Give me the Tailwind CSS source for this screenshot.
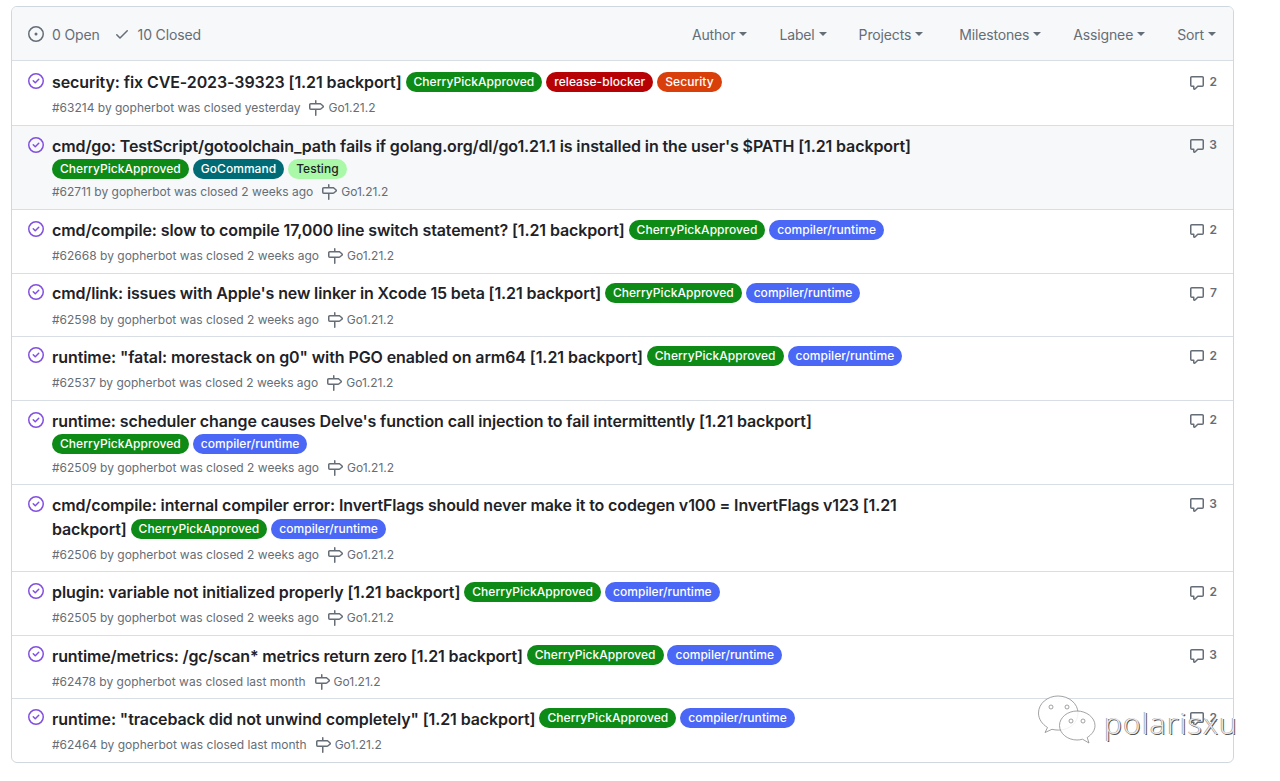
<!DOCTYPE html>
<html lang="en"><head><meta charset="utf-8"><title>Issues</title>
<script src="https://cdn.jsdelivr.net/npm/@tailwindcss/browser@4"></script></head>
<body class="bg-white font-['Inter','Liberation_Sans',sans-serif] overflow-hidden h-[781px] relative">
<div class="ml-[11px] mt-[6px] w-[1223px] h-[757px] border border-[#d0d7de] rounded-md overflow-hidden text-[#1f2328]">
 <div class="h-[53px] bg-[#f6f8fa] flex items-center pl-[16px] pr-[17px] pt-[1px] text-[14px] tracking-[-0.15px] text-[#656d76]">
  <svg class="w-4 h-4 mr-[8px]" viewBox="0 0 16 16" fill="#656d76"><path d="M8 9.5a1.5 1.5 0 1 0 0-3 1.5 1.5 0 0 0 0 3Z"/><path d="M8 0a8 8 0 1 1 0 16A8 8 0 0 1 8 0ZM1.5 8a6.5 6.5 0 1 0 13 0 6.5 6.5 0 0 0-13 0Z"/></svg>
  <span>0 Open</span>
  <svg class="w-4 h-4 ml-[14px] mr-[8px]" viewBox="0 0 16 16" fill="#656d76"><path d="M13.78 4.22a.75.75 0 0 1 0 1.06l-7.25 7.25a.75.75 0 0 1-1.06 0L2.22 9.28a.751.751 0 0 1 1.06-1.06L6 10.94l6.72-6.72a.75.75 0 0 1 1.06 0Z"/></svg>
  <span>10 Closed</span>
  <div class="ml-auto flex items-center">
   <span class="flex items-center">Author<i class="ml-[4px] border-x-4 border-x-transparent border-t-4 border-t-[#656d76]"></i></span>
   <span class="flex items-center ml-[32px]">Label<i class="ml-[4px] border-x-4 border-x-transparent border-t-4 border-t-[#656d76]"></i></span>
   <span class="flex items-center ml-[32px]">Projects<i class="ml-[4px] border-x-4 border-x-transparent border-t-4 border-t-[#656d76]"></i></span>
   <span class="flex items-center ml-[36px]">Milestones<i class="ml-[4px] border-x-4 border-x-transparent border-t-4 border-t-[#656d76]"></i></span>
   <span class="flex items-center ml-[32px]">Assignee<i class="ml-[4px] border-x-4 border-x-transparent border-t-4 border-t-[#656d76]"></i></span>
   <span class="flex items-center ml-[32px]">Sort<i class="ml-[4px] border-x-4 border-x-transparent border-t-4 border-t-[#656d76]"></i></span>
  </div>
 </div>

 <div class="h-[65px] border-t border-[#d8dee4] flex pl-[16px] pr-[16px] pt-[11px]">
  <svg class="w-4 h-4 mt-[1px] mr-[8px] shrink-0" viewBox="0 0 16 16" fill="#8250df"><path d="M11.28 6.78a.75.75 0 0 0-1.06-1.06L7.25 8.69 5.78 7.22a.75.75 0 0 0-1.06 1.06l2 2a.75.75 0 0 0 1.06 0l3.5-3.5Z"/><path d="M16 8A8 8 0 1 1 0 8a8 8 0 0 1 16 0Zm-1.5 0a6.5 6.5 0 1 0-13 0 6.5 6.5 0 0 0 13 0Z"/></svg>
  <div class="flex-1">
   <div class="w-[880px] text-[16px] leading-[21px] font-semibold tracking-[-0.09px]">security: fix CVE-2023-39323 [1.21 backport] <span class="inline-block align-[2px] h-[20px] rounded-full px-[8px] text-[12px] leading-[20px] font-medium tracking-[0.05px] bg-[#0e8a16] text-white">CherryPickApproved</span> <span class="inline-block align-[2px] h-[20px] rounded-full px-[8px] text-[12px] leading-[20px] font-medium tracking-[0.05px] bg-[#b60205] text-white">release-blocker</span> <span class="inline-block align-[2px] h-[20px] rounded-full px-[8px] text-[12px] leading-[20px] font-medium tracking-[0.05px] bg-[#d93f0b] text-white">Security</span></div>
   <div class="mt-[6px] flex items-center text-[12px] leading-[18px] text-[#656d76]">#63214 by gopherbot was closed yesterday<svg class="w-4 h-4 ml-[8px] mr-[4px]" viewBox="0 0 16 16" fill="#656d76"><path d="M7.75 0a.75.75 0 0 1 .75.75V3h3.634c.414 0 .814.147 1.13.414l2.07 1.75a1.75 1.75 0 0 1 0 2.672l-2.07 1.75a1.75 1.75 0 0 1-1.13.414H8.5v5.25a.75.75 0 0 1-1.5 0V10H2.75A1.75 1.75 0 0 1 1 8.25v-3.5C1 3.784 1.784 3 2.75 3H7V.75A.75.75 0 0 1 7.75 0Zm4.384 8.5a.25.25 0 0 0 .161-.06l2.07-1.75a.248.248 0 0 0 0-.38l-2.07-1.75a.25.25 0 0 0-.161-.06H2.75a.25.25 0 0 0-.25.25v3.5c0 .138.112.25.25.25h9.384Z"/></svg>Go1.21.2</div>
  </div>
  <div class="mt-[1px] flex items-start text-[12px] font-semibold leading-[18px] text-[#656d76]"><svg class="w-4 h-4 mr-[5px] mt-[2px]" viewBox="0 0 16 16" fill="#656d76"><path d="M1 2.75C1 1.784 1.784 1 2.75 1h10.5c.966 0 1.75.784 1.75 1.75v7.5A1.75 1.75 0 0 1 13.25 12H9.06l-2.573 2.573A1.458 1.458 0 0 1 4 13.543V12H2.75A1.75 1.75 0 0 1 1 10.25Zm1.75-.25a.25.25 0 0 0-.25.25v7.5c0 .138.112.25.25.25h2a.75.75 0 0 1 .75.75v2.19l2.72-2.72a.749.749 0 0 1 .53-.22h4.5a.25.25 0 0 0 .25-.25v-7.5a.25.25 0 0 0-.25-.25Z"/></svg>2</div>
 </div>

 <div class="h-[84px] bg-[#f6f8fa] border-t border-[#d8dee4] flex pl-[16px] pr-[16px] pt-[9px]">
  <svg class="w-4 h-4 mt-[2px] mr-[8px] shrink-0" viewBox="0 0 16 16" fill="#8250df"><path d="M11.28 6.78a.75.75 0 0 0-1.06-1.06L7.25 8.69 5.78 7.22a.75.75 0 0 0-1.06 1.06l2 2a.75.75 0 0 0 1.06 0l3.5-3.5Z"/><path d="M16 8A8 8 0 1 1 0 8a8 8 0 0 1 16 0Zm-1.5 0a6.5 6.5 0 1 0-13 0 6.5 6.5 0 0 0 13 0Z"/></svg>
  <div class="flex-1">
   <div class="w-[880px] text-[16px] leading-[23px] font-semibold tracking-[-0.11px]">cmd/go: TestScript/gotoolchain_path fails if golang.org/dl/go1.21.1 is installed in the user's $PATH [1.21 backport] <span class="inline-block align-[2px] h-[20px] rounded-full px-[8px] text-[12px] leading-[20px] font-medium tracking-[0.05px] bg-[#0e8a16] text-white">CherryPickApproved</span> <span class="inline-block align-[2px] h-[20px] rounded-full px-[8px] text-[12px] leading-[20px] font-medium tracking-[0.05px] bg-[#006b75] text-white">GoCommand</span> <span class="inline-block align-[2px] h-[20px] rounded-full px-[8px] text-[12px] leading-[20px] font-medium tracking-[0.05px] bg-[#a9f9a9] text-[#1f2328]">Testing</span></div>
   <div class="mt-[2px] flex items-center text-[12px] leading-[18px] text-[#656d76]">#62711 by gopherbot was closed 2 weeks ago<svg class="w-4 h-4 ml-[8px] mr-[4px]" viewBox="0 0 16 16" fill="#656d76"><path d="M7.75 0a.75.75 0 0 1 .75.75V3h3.634c.414 0 .814.147 1.13.414l2.07 1.75a1.75 1.75 0 0 1 0 2.672l-2.07 1.75a1.75 1.75 0 0 1-1.13.414H8.5v5.25a.75.75 0 0 1-1.5 0V10H2.75A1.75 1.75 0 0 1 1 8.25v-3.5C1 3.784 1.784 3 2.75 3H7V.75A.75.75 0 0 1 7.75 0Zm4.384 8.5a.25.25 0 0 0 .161-.06l2.07-1.75a.248.248 0 0 0 0-.38l-2.07-1.75a.25.25 0 0 0-.161-.06H2.75a.25.25 0 0 0-.25.25v3.5c0 .138.112.25.25.25h9.384Z"/></svg>Go1.21.2</div>
  </div>
  <div class="mt-[1px] flex items-start text-[12px] font-semibold leading-[18px] text-[#656d76]"><svg class="w-4 h-4 mr-[4px] mt-[2px]" viewBox="0 0 16 16" fill="#656d76"><path d="M1 2.75C1 1.784 1.784 1 2.75 1h10.5c.966 0 1.75.784 1.75 1.75v7.5A1.75 1.75 0 0 1 13.25 12H9.06l-2.573 2.573A1.458 1.458 0 0 1 4 13.543V12H2.75A1.75 1.75 0 0 1 1 10.25Zm1.75-.25a.25.25 0 0 0-.25.25v7.5c0 .138.112.25.25.25h2a.75.75 0 0 1 .75.75v2.19l2.72-2.72a.749.749 0 0 1 .53-.22h4.5a.25.25 0 0 0 .25-.25v-7.5a.25.25 0 0 0-.25-.25Z"/></svg>3</div>
 </div>

 <div class="h-[64px] border-t border-[#d8dee4] flex pl-[16px] pr-[16px] pt-[10px]">
  <svg class="w-4 h-4 mt-[1px] mr-[8px] shrink-0" viewBox="0 0 16 16" fill="#8250df"><path d="M11.28 6.78a.75.75 0 0 0-1.06-1.06L7.25 8.69 5.78 7.22a.75.75 0 0 0-1.06 1.06l2 2a.75.75 0 0 0 1.06 0l3.5-3.5Z"/><path d="M16 8A8 8 0 1 1 0 8a8 8 0 0 1 16 0Zm-1.5 0a6.5 6.5 0 1 0-13 0 6.5 6.5 0 0 0 13 0Z"/></svg>
  <div class="flex-1">
   <div class="w-[880px] text-[16px] leading-[21px] font-semibold tracking-[-0.11px]">cmd/compile: slow to compile 17,000 line switch statement? [1.21 backport] <span class="inline-block align-[2px] h-[20px] rounded-full px-[8px] text-[12px] leading-[20px] font-medium tracking-[0.05px] bg-[#0e8a16] text-white">CherryPickApproved</span> <span class="inline-block align-[2px] h-[20px] rounded-full px-[8px] text-[12px] leading-[20px] font-medium tracking-[0.05px] bg-[#4a67f5] text-white">compiler/runtime</span></div>
   <div class="mt-[6px] flex items-center text-[12px] leading-[18px] text-[#656d76]">#62668 by gopherbot was closed 2 weeks ago<svg class="w-4 h-4 ml-[8px] mr-[4px]" viewBox="0 0 16 16" fill="#656d76"><path d="M7.75 0a.75.75 0 0 1 .75.75V3h3.634c.414 0 .814.147 1.13.414l2.07 1.75a1.75 1.75 0 0 1 0 2.672l-2.07 1.75a1.75 1.75 0 0 1-1.13.414H8.5v5.25a.75.75 0 0 1-1.5 0V10H2.75A1.75 1.75 0 0 1 1 8.25v-3.5C1 3.784 1.784 3 2.75 3H7V.75A.75.75 0 0 1 7.75 0Zm4.384 8.5a.25.25 0 0 0 .161-.06l2.07-1.75a.248.248 0 0 0 0-.38l-2.07-1.75a.25.25 0 0 0-.161-.06H2.75a.25.25 0 0 0-.25.25v3.5c0 .138.112.25.25.25h9.384Z"/></svg>Go1.21.2</div>
  </div>
  <div class="mt-[1px] flex items-start text-[12px] font-semibold leading-[18px] text-[#656d76]"><svg class="w-4 h-4 mr-[5px] mt-[2px]" viewBox="0 0 16 16" fill="#656d76"><path d="M1 2.75C1 1.784 1.784 1 2.75 1h10.5c.966 0 1.75.784 1.75 1.75v7.5A1.75 1.75 0 0 1 13.25 12H9.06l-2.573 2.573A1.458 1.458 0 0 1 4 13.543V12H2.75A1.75 1.75 0 0 1 1 10.25Zm1.75-.25a.25.25 0 0 0-.25.25v7.5c0 .138.112.25.25.25h2a.75.75 0 0 1 .75.75v2.19l2.72-2.72a.749.749 0 0 1 .53-.22h4.5a.25.25 0 0 0 .25-.25v-7.5a.25.25 0 0 0-.25-.25Z"/></svg>2</div>
 </div>

 <div class="h-[63px] border-t border-[#d8dee4] flex pl-[16px] pr-[16px] pt-[9px]">
  <svg class="w-4 h-4 mt-[1px] mr-[8px] shrink-0" viewBox="0 0 16 16" fill="#8250df"><path d="M11.28 6.78a.75.75 0 0 0-1.06-1.06L7.25 8.69 5.78 7.22a.75.75 0 0 0-1.06 1.06l2 2a.75.75 0 0 0 1.06 0l3.5-3.5Z"/><path d="M16 8A8 8 0 1 1 0 8a8 8 0 0 1 16 0Zm-1.5 0a6.5 6.5 0 1 0-13 0 6.5 6.5 0 0 0 13 0Z"/></svg>
  <div class="flex-1">
   <div class="w-[880px] text-[16px] leading-[21px] font-semibold tracking-[-0.13px]">cmd/link: issues with Apple's new linker in Xcode 15 beta [1.21 backport] <span class="inline-block align-[2px] h-[20px] rounded-full px-[8px] text-[12px] leading-[20px] font-medium tracking-[0.05px] bg-[#0e8a16] text-white">CherryPickApproved</span> <span class="inline-block align-[2px] h-[20px] rounded-full px-[8px] text-[12px] leading-[20px] font-medium tracking-[0.05px] bg-[#4a67f5] text-white">compiler/runtime</span></div>
   <div class="mt-[7px] flex items-center text-[12px] leading-[18px] text-[#656d76]">#62598 by gopherbot was closed 2 weeks ago<svg class="w-4 h-4 ml-[8px] mr-[4px]" viewBox="0 0 16 16" fill="#656d76"><path d="M7.75 0a.75.75 0 0 1 .75.75V3h3.634c.414 0 .814.147 1.13.414l2.07 1.75a1.75 1.75 0 0 1 0 2.672l-2.07 1.75a1.75 1.75 0 0 1-1.13.414H8.5v5.25a.75.75 0 0 1-1.5 0V10H2.75A1.75 1.75 0 0 1 1 8.25v-3.5C1 3.784 1.784 3 2.75 3H7V.75A.75.75 0 0 1 7.75 0Zm4.384 8.5a.25.25 0 0 0 .161-.06l2.07-1.75a.248.248 0 0 0 0-.38l-2.07-1.75a.25.25 0 0 0-.161-.06H2.75a.25.25 0 0 0-.25.25v3.5c0 .138.112.25.25.25h9.384Z"/></svg>Go1.21.2</div>
  </div>
  <div class="mt-[1px] flex items-start text-[12px] font-semibold leading-[18px] text-[#656d76]"><svg class="w-4 h-4 mr-[5px] mt-[2px]" viewBox="0 0 16 16" fill="#656d76"><path d="M1 2.75C1 1.784 1.784 1 2.75 1h10.5c.966 0 1.75.784 1.75 1.75v7.5A1.75 1.75 0 0 1 13.25 12H9.06l-2.573 2.573A1.458 1.458 0 0 1 4 13.543V12H2.75A1.75 1.75 0 0 1 1 10.25Zm1.75-.25a.25.25 0 0 0-.25.25v7.5c0 .138.112.25.25.25h2a.75.75 0 0 1 .75.75v2.19l2.72-2.72a.749.749 0 0 1 .53-.22h4.5a.25.25 0 0 0 .25-.25v-7.5a.25.25 0 0 0-.25-.25Z"/></svg>7</div>
 </div>

 <div class="h-[64px] border-t border-[#d8dee4] flex pl-[16px] pr-[16px] pt-[9px]">
  <svg class="w-4 h-4 mt-[1px] mr-[8px] shrink-0" viewBox="0 0 16 16" fill="#8250df"><path d="M11.28 6.78a.75.75 0 0 0-1.06-1.06L7.25 8.69 5.78 7.22a.75.75 0 0 0-1.06 1.06l2 2a.75.75 0 0 0 1.06 0l3.5-3.5Z"/><path d="M16 8A8 8 0 1 1 0 8a8 8 0 0 1 16 0Zm-1.5 0a6.5 6.5 0 1 0-13 0 6.5 6.5 0 0 0 13 0Z"/></svg>
  <div class="flex-1">
   <div class="w-[880px] text-[16px] leading-[21px] font-semibold tracking-[-0.09px]">runtime: "fatal: morestack on g0" with PGO enabled on arm64 [1.21 backport] <span class="inline-block align-[3px] h-[20px] rounded-full px-[8px] text-[12px] leading-[20px] font-medium tracking-[0.05px] bg-[#0e8a16] text-white">CherryPickApproved</span> <span class="inline-block align-[3px] h-[20px] rounded-full px-[8px] text-[12px] leading-[20px] font-medium tracking-[0.05px] bg-[#4a67f5] text-white">compiler/runtime</span></div>
   <div class="mt-[6px] flex items-center text-[12px] leading-[18px] text-[#656d76]">#62537 by gopherbot was closed 2 weeks ago<svg class="w-4 h-4 ml-[8px] mr-[4px]" viewBox="0 0 16 16" fill="#656d76"><path d="M7.75 0a.75.75 0 0 1 .75.75V3h3.634c.414 0 .814.147 1.13.414l2.07 1.75a1.75 1.75 0 0 1 0 2.672l-2.07 1.75a1.75 1.75 0 0 1-1.13.414H8.5v5.25a.75.75 0 0 1-1.5 0V10H2.75A1.75 1.75 0 0 1 1 8.25v-3.5C1 3.784 1.784 3 2.75 3H7V.75A.75.75 0 0 1 7.75 0Zm4.384 8.5a.25.25 0 0 0 .161-.06l2.07-1.75a.248.248 0 0 0 0-.38l-2.07-1.75a.25.25 0 0 0-.161-.06H2.75a.25.25 0 0 0-.25.25v3.5c0 .138.112.25.25.25h9.384Z"/></svg>Go1.21.2</div>
  </div>
  <div class="mt-[1px] flex items-start text-[12px] font-semibold leading-[18px] text-[#656d76]"><svg class="w-4 h-4 mr-[5px] mt-[2px]" viewBox="0 0 16 16" fill="#656d76"><path d="M1 2.75C1 1.784 1.784 1 2.75 1h10.5c.966 0 1.75.784 1.75 1.75v7.5A1.75 1.75 0 0 1 13.25 12H9.06l-2.573 2.573A1.458 1.458 0 0 1 4 13.543V12H2.75A1.75 1.75 0 0 1 1 10.25Zm1.75-.25a.25.25 0 0 0-.25.25v7.5c0 .138.112.25.25.25h2a.75.75 0 0 1 .75.75v2.19l2.72-2.72a.749.749 0 0 1 .53-.22h4.5a.25.25 0 0 0 .25-.25v-7.5a.25.25 0 0 0-.25-.25Z"/></svg>2</div>
 </div>

 <div class="h-[84px] border-t border-[#d8dee4] flex pl-[16px] pr-[16px] pt-[9px]">
  <svg class="w-4 h-4 mt-[2px] mr-[8px] shrink-0" viewBox="0 0 16 16" fill="#8250df"><path d="M11.28 6.78a.75.75 0 0 0-1.06-1.06L7.25 8.69 5.78 7.22a.75.75 0 0 0-1.06 1.06l2 2a.75.75 0 0 0 1.06 0l3.5-3.5Z"/><path d="M16 8A8 8 0 1 1 0 8a8 8 0 0 1 16 0Zm-1.5 0a6.5 6.5 0 1 0-13 0 6.5 6.5 0 0 0 13 0Z"/></svg>
  <div class="flex-1">
   <div class="w-[880px] text-[16px] leading-[23px] font-semibold tracking-[-0.11px]">runtime: scheduler change causes Delve's function call injection to fail intermittently [1.21 backport] <span class="inline-block align-[2px] h-[20px] rounded-full px-[8px] text-[12px] leading-[20px] font-medium tracking-[0.05px] bg-[#0e8a16] text-white">CherryPickApproved</span> <span class="inline-block align-[2px] h-[20px] rounded-full px-[8px] text-[12px] leading-[20px] font-medium tracking-[0.05px] bg-[#4a67f5] text-white">compiler/runtime</span></div>
   <div class="mt-[3px] flex items-center text-[12px] leading-[18px] text-[#656d76]">#62509 by gopherbot was closed 2 weeks ago<svg class="w-4 h-4 ml-[8px] mr-[4px]" viewBox="0 0 16 16" fill="#656d76"><path d="M7.75 0a.75.75 0 0 1 .75.75V3h3.634c.414 0 .814.147 1.13.414l2.07 1.75a1.75 1.75 0 0 1 0 2.672l-2.07 1.75a1.75 1.75 0 0 1-1.13.414H8.5v5.25a.75.75 0 0 1-1.5 0V10H2.75A1.75 1.75 0 0 1 1 8.25v-3.5C1 3.784 1.784 3 2.75 3H7V.75A.75.75 0 0 1 7.75 0Zm4.384 8.5a.25.25 0 0 0 .161-.06l2.07-1.75a.248.248 0 0 0 0-.38l-2.07-1.75a.25.25 0 0 0-.161-.06H2.75a.25.25 0 0 0-.25.25v3.5c0 .138.112.25.25.25h9.384Z"/></svg>Go1.21.2</div>
  </div>
  <div class="mt-[1px] flex items-start text-[12px] font-semibold leading-[18px] text-[#656d76]"><svg class="w-4 h-4 mr-[5px] mt-[2px]" viewBox="0 0 16 16" fill="#656d76"><path d="M1 2.75C1 1.784 1.784 1 2.75 1h10.5c.966 0 1.75.784 1.75 1.75v7.5A1.75 1.75 0 0 1 13.25 12H9.06l-2.573 2.573A1.458 1.458 0 0 1 4 13.543V12H2.75A1.75 1.75 0 0 1 1 10.25Zm1.75-.25a.25.25 0 0 0-.25.25v7.5c0 .138.112.25.25.25h2a.75.75 0 0 1 .75.75v2.19l2.72-2.72a.749.749 0 0 1 .53-.22h4.5a.25.25 0 0 0 .25-.25v-7.5a.25.25 0 0 0-.25-.25Z"/></svg>2</div>
 </div>

 <div class="h-[87px] border-t border-[#d8dee4] flex pl-[16px] pr-[16px] pt-[8px]">
  <svg class="w-4 h-4 mt-[3px] mr-[8px] shrink-0" viewBox="0 0 16 16" fill="#8250df"><path d="M11.28 6.78a.75.75 0 0 0-1.06-1.06L7.25 8.69 5.78 7.22a.75.75 0 0 0-1.06 1.06l2 2a.75.75 0 0 0 1.06 0l3.5-3.5Z"/><path d="M16 8A8 8 0 1 1 0 8a8 8 0 0 1 16 0Zm-1.5 0a6.5 6.5 0 1 0-13 0 6.5 6.5 0 0 0 13 0Z"/></svg>
  <div class="flex-1">
   <div class="w-[880px] text-[16px] leading-[24px] font-semibold tracking-[-0.125px]">cmd/compile: internal compiler error: InvertFlags should never make it to codegen v100 = InvertFlags v123 [1.21 backport] <span class="inline-block align-[2px] h-[20px] rounded-full px-[8px] text-[12px] leading-[20px] font-medium tracking-[0.05px] bg-[#0e8a16] text-white">CherryPickApproved</span> <span class="inline-block align-[2px] h-[20px] rounded-full px-[8px] text-[12px] leading-[20px] font-medium tracking-[0.05px] bg-[#4a67f5] text-white">compiler/runtime</span></div>
   <div class="mt-[5px] flex items-center text-[12px] leading-[18px] text-[#656d76]">#62506 by gopherbot was closed 2 weeks ago<svg class="w-4 h-4 ml-[8px] mr-[4px]" viewBox="0 0 16 16" fill="#656d76"><path d="M7.75 0a.75.75 0 0 1 .75.75V3h3.634c.414 0 .814.147 1.13.414l2.07 1.75a1.75 1.75 0 0 1 0 2.672l-2.07 1.75a1.75 1.75 0 0 1-1.13.414H8.5v5.25a.75.75 0 0 1-1.5 0V10H2.75A1.75 1.75 0 0 1 1 8.25v-3.5C1 3.784 1.784 3 2.75 3H7V.75A.75.75 0 0 1 7.75 0Zm4.384 8.5a.25.25 0 0 0 .161-.06l2.07-1.75a.248.248 0 0 0 0-.38l-2.07-1.75a.25.25 0 0 0-.161-.06H2.75a.25.25 0 0 0-.25.25v3.5c0 .138.112.25.25.25h9.384Z"/></svg>Go1.21.2</div>
  </div>
  <div class="mt-[2px] flex items-start text-[12px] font-semibold leading-[18px] text-[#656d76]"><svg class="w-4 h-4 mr-[4px] mt-[2px]" viewBox="0 0 16 16" fill="#656d76"><path d="M1 2.75C1 1.784 1.784 1 2.75 1h10.5c.966 0 1.75.784 1.75 1.75v7.5A1.75 1.75 0 0 1 13.25 12H9.06l-2.573 2.573A1.458 1.458 0 0 1 4 13.543V12H2.75A1.75 1.75 0 0 1 1 10.25Zm1.75-.25a.25.25 0 0 0-.25.25v7.5c0 .138.112.25.25.25h2a.75.75 0 0 1 .75.75v2.19l2.72-2.72a.749.749 0 0 1 .53-.22h4.5a.25.25 0 0 0 .25-.25v-7.5a.25.25 0 0 0-.25-.25Z"/></svg>3</div>
 </div>

 <div class="h-[64px] border-t border-[#d8dee4] flex pl-[16px] pr-[16px] pt-[10px]">
  <svg class="w-4 h-4 mt-[1px] mr-[8px] shrink-0" viewBox="0 0 16 16" fill="#8250df"><path d="M11.28 6.78a.75.75 0 0 0-1.06-1.06L7.25 8.69 5.78 7.22a.75.75 0 0 0-1.06 1.06l2 2a.75.75 0 0 0 1.06 0l3.5-3.5Z"/><path d="M16 8A8 8 0 1 1 0 8a8 8 0 0 1 16 0Zm-1.5 0a6.5 6.5 0 1 0-13 0 6.5 6.5 0 0 0 13 0Z"/></svg>
  <div class="flex-1">
   <div class="w-[880px] text-[16px] leading-[21px] font-semibold tracking-[-0.1px]">plugin: variable not initialized properly [1.21 backport] <span class="inline-block align-[2px] h-[20px] rounded-full px-[8px] text-[12px] leading-[20px] font-medium tracking-[0.05px] bg-[#0e8a16] text-white">CherryPickApproved</span> <span class="inline-block align-[2px] h-[20px] rounded-full px-[8px] text-[12px] leading-[20px] font-medium tracking-[0.05px] bg-[#4a67f5] text-white">compiler/runtime</span></div>
   <div class="mt-[6px] flex items-center text-[12px] leading-[18px] text-[#656d76]">#62505 by gopherbot was closed 2 weeks ago<svg class="w-4 h-4 ml-[8px] mr-[4px]" viewBox="0 0 16 16" fill="#656d76"><path d="M7.75 0a.75.75 0 0 1 .75.75V3h3.634c.414 0 .814.147 1.13.414l2.07 1.75a1.75 1.75 0 0 1 0 2.672l-2.07 1.75a1.75 1.75 0 0 1-1.13.414H8.5v5.25a.75.75 0 0 1-1.5 0V10H2.75A1.75 1.75 0 0 1 1 8.25v-3.5C1 3.784 1.784 3 2.75 3H7V.75A.75.75 0 0 1 7.75 0Zm4.384 8.5a.25.25 0 0 0 .161-.06l2.07-1.75a.248.248 0 0 0 0-.38l-2.07-1.75a.25.25 0 0 0-.161-.06H2.75a.25.25 0 0 0-.25.25v3.5c0 .138.112.25.25.25h9.384Z"/></svg>Go1.21.2</div>
  </div>
  <div class="mt-[1px] flex items-start text-[12px] font-semibold leading-[18px] text-[#656d76]"><svg class="w-4 h-4 mr-[5px] mt-[2px]" viewBox="0 0 16 16" fill="#656d76"><path d="M1 2.75C1 1.784 1.784 1 2.75 1h10.5c.966 0 1.75.784 1.75 1.75v7.5A1.75 1.75 0 0 1 13.25 12H9.06l-2.573 2.573A1.458 1.458 0 0 1 4 13.543V12H2.75A1.75 1.75 0 0 1 1 10.25Zm1.75-.25a.25.25 0 0 0-.25.25v7.5c0 .138.112.25.25.25h2a.75.75 0 0 1 .75.75v2.19l2.72-2.72a.749.749 0 0 1 .53-.22h4.5a.25.25 0 0 0 .25-.25v-7.5a.25.25 0 0 0-.25-.25Z"/></svg>2</div>
 </div>

 <div class="h-[63px] border-t border-[#d8dee4] flex pl-[16px] pr-[16px] pt-[9px]">
  <svg class="w-4 h-4 mt-[1px] mr-[8px] shrink-0" viewBox="0 0 16 16" fill="#8250df"><path d="M11.28 6.78a.75.75 0 0 0-1.06-1.06L7.25 8.69 5.78 7.22a.75.75 0 0 0-1.06 1.06l2 2a.75.75 0 0 0 1.06 0l3.5-3.5Z"/><path d="M16 8A8 8 0 1 1 0 8a8 8 0 0 1 16 0Zm-1.5 0a6.5 6.5 0 1 0-13 0 6.5 6.5 0 0 0 13 0Z"/></svg>
  <div class="flex-1">
   <div class="w-[880px] text-[16px] leading-[21px] font-semibold tracking-[-0.155px]">runtime/metrics: /gc/scan* metrics return zero [1.21 backport] <span class="inline-block align-[3px] h-[20px] rounded-full px-[8px] text-[12px] leading-[20px] font-medium tracking-[0.05px] bg-[#0e8a16] text-white">CherryPickApproved</span> <span class="inline-block align-[3px] h-[20px] rounded-full px-[8px] text-[12px] leading-[20px] font-medium tracking-[0.05px] bg-[#4a67f5] text-white">compiler/runtime</span></div>
   <div class="mt-[6px] flex items-center text-[12px] leading-[18px] text-[#656d76]">#62478 by gopherbot was closed last month<svg class="w-4 h-4 ml-[8px] mr-[4px]" viewBox="0 0 16 16" fill="#656d76"><path d="M7.75 0a.75.75 0 0 1 .75.75V3h3.634c.414 0 .814.147 1.13.414l2.07 1.75a1.75 1.75 0 0 1 0 2.672l-2.07 1.75a1.75 1.75 0 0 1-1.13.414H8.5v5.25a.75.75 0 0 1-1.5 0V10H2.75A1.75 1.75 0 0 1 1 8.25v-3.5C1 3.784 1.784 3 2.75 3H7V.75A.75.75 0 0 1 7.75 0Zm4.384 8.5a.25.25 0 0 0 .161-.06l2.07-1.75a.248.248 0 0 0 0-.38l-2.07-1.75a.25.25 0 0 0-.161-.06H2.75a.25.25 0 0 0-.25.25v3.5c0 .138.112.25.25.25h9.384Z"/></svg>Go1.21.2</div>
  </div>
  <div class="mt-[1px] flex items-start text-[12px] font-semibold leading-[18px] text-[#656d76]"><svg class="w-4 h-4 mr-[4px] mt-[2px]" viewBox="0 0 16 16" fill="#656d76"><path d="M1 2.75C1 1.784 1.784 1 2.75 1h10.5c.966 0 1.75.784 1.75 1.75v7.5A1.75 1.75 0 0 1 13.25 12H9.06l-2.573 2.573A1.458 1.458 0 0 1 4 13.543V12H2.75A1.75 1.75 0 0 1 1 10.25Zm1.75-.25a.25.25 0 0 0-.25.25v7.5c0 .138.112.25.25.25h2a.75.75 0 0 1 .75.75v2.19l2.72-2.72a.749.749 0 0 1 .53-.22h4.5a.25.25 0 0 0 .25-.25v-7.5a.25.25 0 0 0-.25-.25Z"/></svg>3</div>
 </div>

 <div class="h-[64px] border-t border-[#d8dee4] flex pl-[16px] pr-[16px] pt-[9px]">
  <svg class="w-4 h-4 mt-[1px] mr-[8px] shrink-0" viewBox="0 0 16 16" fill="#8250df"><path d="M11.28 6.78a.75.75 0 0 0-1.06-1.06L7.25 8.69 5.78 7.22a.75.75 0 0 0-1.06 1.06l2 2a.75.75 0 0 0 1.06 0l3.5-3.5Z"/><path d="M16 8A8 8 0 1 1 0 8a8 8 0 0 1 16 0Zm-1.5 0a6.5 6.5 0 1 0-13 0 6.5 6.5 0 0 0 13 0Z"/></svg>
  <div class="flex-1">
   <div class="w-[880px] text-[16px] leading-[21px] font-semibold tracking-[-0.1px]">runtime: "traceback did not unwind completely" [1.21 backport] <span class="inline-block align-[3px] h-[20px] rounded-full px-[8px] text-[12px] leading-[20px] font-medium tracking-[0.05px] bg-[#0e8a16] text-white">CherryPickApproved</span> <span class="inline-block align-[3px] h-[20px] rounded-full px-[8px] text-[12px] leading-[20px] font-medium tracking-[0.05px] bg-[#4a67f5] text-white">compiler/runtime</span></div>
   <div class="mt-[6px] flex items-center text-[12px] leading-[18px] text-[#656d76]">#62464 by gopherbot was closed last month<svg class="w-4 h-4 ml-[8px] mr-[4px]" viewBox="0 0 16 16" fill="#656d76"><path d="M7.75 0a.75.75 0 0 1 .75.75V3h3.634c.414 0 .814.147 1.13.414l2.07 1.75a1.75 1.75 0 0 1 0 2.672l-2.07 1.75a1.75 1.75 0 0 1-1.13.414H8.5v5.25a.75.75 0 0 1-1.5 0V10H2.75A1.75 1.75 0 0 1 1 8.25v-3.5C1 3.784 1.784 3 2.75 3H7V.75A.75.75 0 0 1 7.75 0Zm4.384 8.5a.25.25 0 0 0 .161-.06l2.07-1.75a.248.248 0 0 0 0-.38l-2.07-1.75a.25.25 0 0 0-.161-.06H2.75a.25.25 0 0 0-.25.25v3.5c0 .138.112.25.25.25h9.384Z"/></svg>Go1.21.2</div>
  </div>
  <div class="mt-[1px] flex items-start text-[12px] font-semibold leading-[18px] text-[#656d76]"><svg class="w-4 h-4 mr-[5px] mt-[2px]" viewBox="0 0 16 16" fill="#656d76"><path d="M1 2.75C1 1.784 1.784 1 2.75 1h10.5c.966 0 1.75.784 1.75 1.75v7.5A1.75 1.75 0 0 1 13.25 12H9.06l-2.573 2.573A1.458 1.458 0 0 1 4 13.543V12H2.75A1.75 1.75 0 0 1 1 10.25Zm1.75-.25a.25.25 0 0 0-.25.25v7.5c0 .138.112.25.25.25h2a.75.75 0 0 1 .75.75v2.19l2.72-2.72a.749.749 0 0 1 .53-.22h4.5a.25.25 0 0 0 .25-.25v-7.5a.25.25 0 0 0-.25-.25Z"/></svg>2</div>
 </div>
</div>

<div class="absolute left-[1036px] top-[694px] w-[205px] h-[52px] flex items-start">
 <svg class="w-[62px] h-[52px] shrink-0" viewBox="0 0 62 52" fill="#ffffff" fill-opacity="0.85" stroke="#8a8a8a" stroke-width="0.8"><path d="M22 2C11.5 2 2.5 9.5 2.5 19c0 6 3.5 11 9 14.5l-2.5 5 7-3.2c2 .5 4 .8 6.5.8 11 0 19.5-7.5 19.5-17S33 2 22 2Z"/><path d="M41 17C31.5 17 23.5 23.5 23.5 31.5S31.5 46 41 46c2 0 3.7-.2 5.5-.8L53 49l-1.8-5.5c4.8-3 7.8-7.2 7.8-12C59 23.5 50.5 17 41 17Z"/><circle cx="15" cy="13" r="2"/><circle cx="31" cy="13" r="2"/><circle cx="35" cy="27" r="2"/><circle cx="47" cy="27" r="2"/></svg>
 <span class="ml-[6px] mt-[10px] font-['Open_Sans',sans-serif] font-light text-[30px] leading-[38px] tracking-[1.2px] text-white/85 [text-shadow:1px_1px_0.5px_#555,-0.5px_0_0.5px_#777]">polarisxu</span>
</div>
</body></html>
